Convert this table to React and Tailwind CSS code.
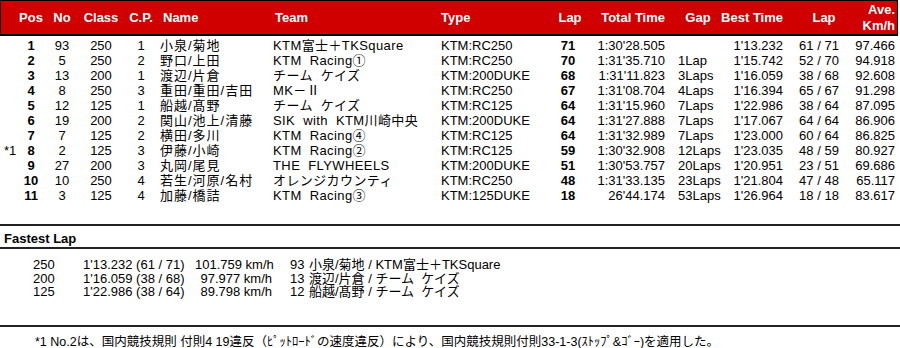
import React from "react";

const rows = [
  ["", "1", "93", "250", "1", "小泉/菊地", "KTM富士＋TKSquare", "KTM:RC250", "71", "1:30'28.505", "", "1'13.232", "61 / 71", "97.466"],
  ["", "2", "5", "250", "2", "野口/上田", "KTM  Racing①", "KTM:RC250", "70", "1:31'35.710", "1Lap", "1'15.742", "52 / 70", "94.918"],
  ["", "3", "13", "200", "1", "渡辺/片倉", "チーム  ケイズ", "KTM:200DUKE", "68", "1:31'11.823", "3Laps", "1'16.059", "38 / 68", "92.608"],
  ["", "4", "8", "250", "3", "重田/重田/吉田", "MK－Ⅱ", "KTM:RC250", "67", "1:31'08.704", "4Laps", "1'16.394", "65 / 67", "91.298"],
  ["", "5", "12", "125", "1", "船越/髙野", "チーム  ケイズ", "KTM:RC125", "64", "1:31'15.960", "7Laps", "1'22.986", "38 / 64", "87.095"],
  ["", "6", "19", "200", "2", "関山/池上/清藤", "SIK  with  KTM川崎中央", "KTM:200DUKE", "64", "1:31'27.888", "7Laps", "1'17.067", "64 / 64", "86.906"],
  ["", "7", "7", "125", "2", "横田/多川", "KTM  Racing④", "KTM:RC125", "64", "1:31'32.989", "7Laps", "1'23.000", "60 / 64", "86.825"],
  ["*1", "8", "2", "125", "3", "伊藤/小崎", "KTM  Racing②", "KTM:RC125", "59", "1:30'32.908", "12Laps", "1'23.035", "48 / 59", "80.927"],
  ["", "9", "27", "200", "3", "丸岡/尾見", "THE  FLYWHEELS", "KTM:200DUKE", "51", "1:30'53.757", "20Laps", "1'20.951", "23 / 51", "69.686"],
  ["", "10", "10", "250", "4", "若生/河原/名村", "オレンジカウンティ", "KTM:RC250", "48", "1:31'33.135", "23Laps", "1'21.804", "47 / 48", "65.117"],
  ["", "11", "3", "125", "4", "加藤/橋詰", "KTM  Racing③", "KTM:125DUKE", "18", "26'44.174", "53Laps", "1'26.964", "18 / 18", "83.617"],
];

const fastest = [
  ["250", "1'13.232 (61 / 71)", "101.759 km/h", "93", "小泉/菊地 / KTM富士＋TKSquare"],
  ["200", "1'16.059 (38 / 68)", "97.977 km/h", "13", "渡辺/片倉 / チーム  ケイズ"],
  ["125", "1'22.986 (38 / 64)", "89.798 km/h", "12", "船越/髙野 / チーム  ケイズ"],
];

// column template shared by header and body
const cols =
  "grid grid-cols-[16px_30px_32px_46px_34px_115px_168px_109px_36px_79px_53px_65px_72px_40px]";

const App = () => {
  return (
    <div
      className="w-[900px] h-[348px] bg-white text-black text-[13px] overflow-hidden"
      style={{ fontFamily: '"Liberation Sans", "Noto Sans CJK JP", sans-serif' }}
    >
      <div className="w-[898px] h-[36px] bg-[#d00000] border border-black border-b-2 text-white font-bold">
        <div className={`${cols} h-full items-center leading-[16px] -ml-px`}>
          <div></div>
          <div className="text-center">Pos</div>
          <div className="text-center">No</div>
          <div className="text-center">Class</div>
          <div className="text-center">C.P.</div>
          <div className="pl-[5px]">Name</div>
          <div className="pl-[2px]">Team</div>
          <div>Type</div>
          <div className="text-center pl-[4px]">Lap</div>
          <div className="text-right">Total Time</div>
          <div className="text-center pl-[13px]">Gap</div>
          <div className="text-right">Best Time</div>
          <div className="text-center pl-[10px]">Lap</div>
          <div className="text-right">
            Ave.
            <br />
            Km/h
          </div>
        </div>
      </div>

      <div className="pt-[2px]">
        {rows.map((r, i) => (
          <div key={i} className={`${cols} h-[15px] leading-[15px] whitespace-pre`}>
            <div className="pl-[4px]">{r[0]}</div>
            <div className="text-center font-bold">{r[1]}</div>
            <div className="text-center">{r[2]}</div>
            <div className="text-center">{r[3]}</div>
            <div className="text-center">{r[4]}</div>
            <div className="pl-[2px] tracking-[1px]">{r[5]}</div>
            <div className="tracking-[0.4px]">{r[6]}</div>
            <div>{r[7]}</div>
            <div className="text-center font-bold">{r[8]}</div>
            <div className="text-right">{r[9]}</div>
            <div className="pl-[13px]">{r[10]}</div>
            <div className="text-right">{r[11]}</div>
            <div className="text-center">{r[12]}</div>
            <div className="text-right">{r[13]}</div>
          </div>
        ))}
      </div>

      <div className="mt-[21px] border-t-2 border-[#222]">
        <div className="h-[23px] leading-[25px] pl-[4px] font-bold border-b-2 border-[#222]">
          Fastest Lap
        </div>
        <div className="pt-[9px]">
          {fastest.map((f, i) => (
            <div
              key={i}
              className="grid grid-cols-[83px_112px_77px_18px_19px_1fr] h-[13.5px] leading-[13.5px] whitespace-pre"
            >
              <div className="pl-[33px]">{f[0]}</div>
              <div>{f[1]}</div>
              <div className="text-right">{f[2]}</div>
              <div></div>
              <div>{f[3]}</div>
              <div>{f[4]}</div>
            </div>
          ))}
        </div>
      </div>

      <div className="mt-[26px] border-t-2 border-[#222]">
        <div className="pl-[35px] pt-[8px] text-[12.5px] leading-[14px] whitespace-pre">
          *1 No.2は、国内競技規則 付則4 19違反（ﾋﾟｯﾄﾛｰﾄﾞの速度違反）により、国内競技規則付則33-1-3(ｽﾄｯﾌﾟ&ｺﾞｰ)を適用した。
        </div>
      </div>
    </div>
  );
};

export default App;
